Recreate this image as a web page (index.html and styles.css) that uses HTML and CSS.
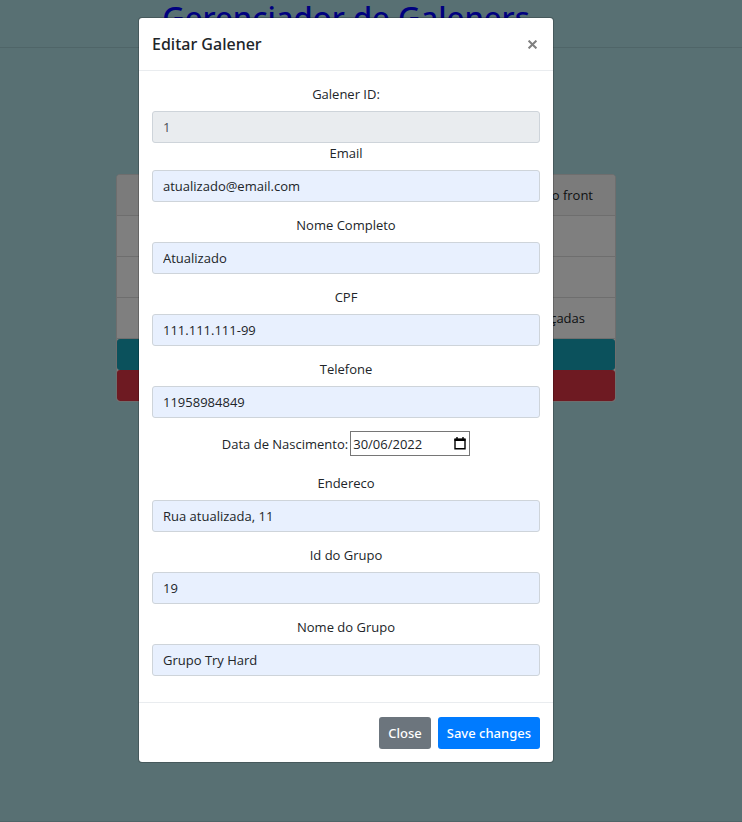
FILE: index.html
```html
<!DOCTYPE html>
<html lang="pt-BR">
<head>
<meta charset="utf-8">
<meta name="viewport" content="width=device-width, initial-scale=1">
<title>Gerenciador de Galeners</title>
<link rel="stylesheet" href="styles.css">
</head>
<body>
<div class="page">
  <header class="page-header">
    <h1 class="page-title"><a href="#">Gerenciador de Galeners</a></h1>
  </header>
  <main class="page-main">
    <section class="card">
      <div class="card-row card-head">o front</div>
      <div class="card-row"></div>
      <div class="card-row"></div>
      <div class="card-row card-note">çadas</div>
      <button type="button" class="card-action info" aria-label="Editar"></button>
      <button type="button" class="card-action danger" aria-label="Excluir"></button>
    </section>
  </main>
</div>

<div class="backdrop">
  <div class="modal" role="dialog" aria-modal="true" aria-labelledby="modal-title">
    <div class="modal-header">
      <h2 class="modal-title" id="modal-title">Editar Galener</h2>
      <button type="button" class="close" aria-label="Fechar">
        <svg viewBox="0 0 9 9" width="9" height="9"><path d="M0.6 0.6 8.4 8.4M8.4 0.6 0.6 8.4"/></svg>
      </button>
    </div>
    <form class="modal-body" id="edit-form">
      <div class="field tight">
        <label for="galener-id">Galener ID:</label>
        <input class="control" id="galener-id" type="text" value="1" disabled>
      </div>
      <div class="field">
        <label for="email">Email</label>
        <input class="control" id="email" type="email" value="atualizado@email.com">
      </div>
      <div class="field">
        <label for="name">Nome Completo</label>
        <input class="control" id="name" type="text" value="Atualizado">
      </div>
      <div class="field">
        <label for="cpf">CPF</label>
        <input class="control" id="cpf" type="text" value="111.111.111-99">
      </div>
      <div class="field">
        <label for="phone">Telefone</label>
        <input class="control" id="phone" type="tel" value="11958984849">
      </div>
      <div class="date-field">
        <label for="birth">Data de Nascimento:</label>
        <span class="date-box">
          <input id="birth" type="text" value="30/06/2022">
          <svg viewBox="0 0 12 13" width="12" height="13"><path class="frame" d="M1 2.5h10v9.2H1z"/><path class="bar" d="M.5 1.5h11v2.5H.5zM2.3 0h1.4v2H2.3zM8.3 0h1.4v2H8.3z"/></svg>
        </span>
      </div>
      <div class="field">
        <label for="address">Endereco</label>
        <input class="control" id="address" type="text" value="Rua atualizada, 11">
      </div>
      <div class="field">
        <label for="group-id">Id do Grupo</label>
        <input class="control" id="group-id" type="text" value="19">
      </div>
      <div class="field">
        <label for="group-name">Nome do Grupo</label>
        <input class="control" id="group-name" type="text" value="Grupo Try Hard">
      </div>
    </form>
    <div class="modal-footer">
      <button type="button" class="btn secondary">Close</button>
      <button type="submit" form="edit-form" class="btn primary">Save changes</button>
    </div>
  </div>
</div>
</body>
</html>
```

FILE: styles.css
```css
* { box-sizing: border-box; }

body {
  margin: 0;
  background: #b0e0e6;
  color: #212529;
  font-family: "Open Sans", "Noto Sans", sans-serif;
  font-size: 13px;
  line-height: 20px;
}

button, input { font: inherit; color: inherit; }

.page {
  min-height: 100vh;
  border-bottom: 1px solid #9ecad0;
}

.page-header {
  height: 48px;
  padding-right: 50px;
  border-bottom: 1px solid #9ecad0;
  text-align: center;
}

.page-title,
.modal-title,
.btn {
  font-family: "Noto Sans", "Open Sans", sans-serif;
  font-weight: 500;
}

.page-title {
  margin: 0;
  font-size: 31px;
  line-height: 34px;
}

.page-title a { color: #0000ff; text-decoration: none; }

.page-main {
  display: flex;
  justify-content: center;
  padding: 126px 10px 0 0;
}

.card {
  display: flex;
  flex-direction: column;
  width: 70%;
  max-width: 500px;
  overflow: hidden;
  background: #fff;
  border: 1px solid #dcdcdc;
  border-radius: 4px;
}

.card-row {
  height: 41px;
  padding: 10px 22px;
  border-bottom: 1px solid #dcdcdc;
  text-align: right;
}

.card-head { background: #f7f7f7; }
.card-note { padding-right: 30px; }

.card-action {
  height: 31px;
  border: 0;
  border-radius: 3px;
}

.info { background: #17a2b8; }
.danger { background: #dc3545; }

.backdrop {
  position: absolute;
  inset: 0;
  min-height: 100vh;
  padding: 17px 50px 17px 0;
  background: rgba(0, 0, 0, 0.5);
}

.modal {
  max-width: 416px;
  margin: 0 auto;
  background: #fff;
  background-clip: padding-box;
  border: 1px solid rgba(0, 0, 0, 0.2);
  border-radius: 4px;
}

.modal-header {
  display: flex;
  align-items: center;
  justify-content: space-between;
  height: 53px;
  padding: 0 13px;
  border-bottom: 1px solid #e9ecef;
}

.modal-title {
  margin: 0;
  font-size: 16px;
  line-height: 24px;
}

.close {
  display: flex;
  padding: 3px;
  border: 0;
  background: none;
}

.close svg {
  fill: none;
  stroke: #7f7f7f;
  stroke-width: 2;
}

.modal-body { padding: 13px; }

.field {
  display: flex;
  flex-direction: column;
  gap: 7px;
  margin-bottom: 13px;
  text-align: center;
}

.tight { margin-bottom: 0; }

.control {
  width: 100%;
  height: 32px;
  padding: 5px 10px;
  border: 1px solid #ced4da;
  border-radius: 3px;
  background: #e8f0fe;
}

.control:disabled {
  background: #e9ecef;
  color: #495057;
}

.date-field {
  display: flex;
  align-items: center;
  justify-content: center;
  gap: 2px;
  margin-bottom: 17px;
}

.date-box {
  display: flex;
  align-items: center;
  width: 120px;
  height: 25px;
  padding: 0 3px 0 2px;
  border: 1px solid #767676;
}

.date-box input {
  flex: 1;
  min-width: 0;
  padding: 0;
  border: 0;
  background: none;
}

.frame { fill: none; stroke: #000; stroke-width: 1.4; }
.bar { fill: #000; }

.modal-footer {
  display: flex;
  justify-content: flex-end;
  gap: 7px;
  padding: 14px 13px 13px;
  border-top: 1px solid #e9ecef;
}

.btn {
  height: 32px;
  padding: 0 9px;
  border: 0;
  border-radius: 3px;
  color: #fff;
}

.secondary { background: #6c757d; }
.primary { background: #007bff; }
```
